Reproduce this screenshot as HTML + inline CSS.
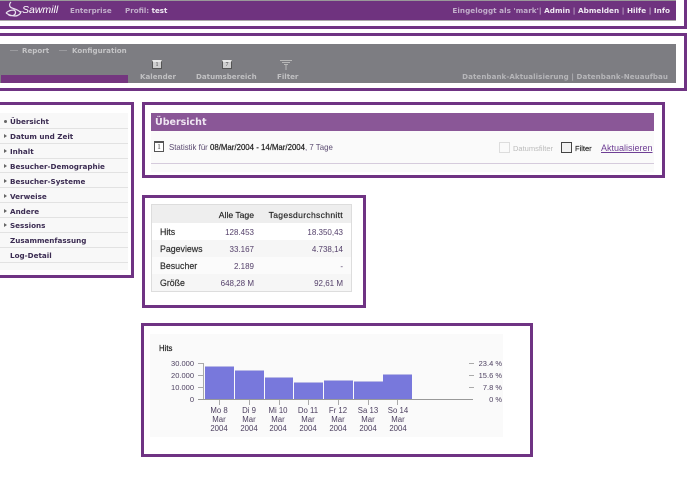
<!DOCTYPE html>
<html lang="de">
<head>
<meta charset="utf-8">
<title>Sawmill</title>
<style>
html,body{margin:0;padding:0;background:#fff}
#p{position:relative;width:690px;height:486px;overflow:hidden;background:#fff;font-family:"DejaVu Sans","Liberation Sans",sans-serif;font-size:7.5px;color:#3a2a50;filter:blur(.3px)}
#p div,#p span.a{position:absolute;white-space:nowrap}
.b{background:#6f3383}
.v{font-weight:bold;font-size:7.1px}
.n{color:#3b2c52;font-weight:bold;font-size:7.2px;left:10px;margin-top:0.5px}
.s{left:0;width:128px;height:1px;background:#e2e2e2}
.ar{left:4px;width:0;height:0;border-left:3px solid #666;border-top:2.5px solid transparent;border-bottom:2.5px solid transparent}
.t{font-family:"Liberation Sans",sans-serif;font-size:8.2px;color:#333}
.l{font-size:8.8px;-webkit-text-stroke:.2px #333;left:160px}
.h{color:#222;-webkit-text-stroke:.15px #222;font-size:8.6px}
.r{text-align:right;color:#54406a;font-size:8px}
.bar{background:#7878dc;width:29px;border-top:1px solid #b9b9e6;box-sizing:border-box}
.x{font-family:"Liberation Sans",sans-serif;font-size:7.8px;color:#4d4060;text-align:center;width:40px;line-height:9px;white-space:normal!important}
.y{font-family:"Liberation Sans",sans-serif;font-size:7.5px;color:#4d4060;text-align:right}
.ic{width:10px;height:9px;background:#cfcfd0;border:1px solid #555;border-top:2px solid #e8e8e8;box-sizing:border-box;font:6px/6px "Liberation Serif",serif;text-align:center;color:#444}
.tk{width:1px;height:5px;background:#aaa;top:400px}
</style>
</head>
<body>
<div id="p">
<!-- top header -->
<div style="left:0;top:0;width:676px;height:21px;background:#6f337f;border-top:1px solid #999;border-bottom:1px solid #aaa;box-sizing:border-box"></div>
<svg style="position:absolute;left:5px;top:1px" width="18" height="18" viewBox="0 0 18 18" fill="none" stroke="#e8e0ee" stroke-width="1.2"><path d="M6 1C4 3 4 6 7 7c3 1 7 2 9 5M16 10c0 3-3 5-6 5-3 0-6-1-9-3M1 12c2-2 5-3 8-3 2 1 2 4 0 5-2 1-5 1-6-1"/></svg>
<div style="left:22px;top:3px;font:italic 10.500px 'Liberation Sans',sans-serif;color:#fff;line-height:14px">Sawmill</div>
<div class="v" style="left:70px;top:6px;color:#c2aecb">Enterprise</div>
<div class="v" style="left:125px;top:6px;color:#c2aecb">Profil: <span style="color:#efe9f2">test</span></div>
<div class="v" style="right:20px;top:6px;color:#c2aecb;font-size:7.25px;letter-spacing:.02px">Eingeloggt als 'mark'| <span style="color:#efe9f2">Admin</span> | <span style="color:#efe9f2">Abmelden</span> | <span style="color:#efe9f2">Hilfe</span> | <span style="color:#efe9f2">Info</span></div>
<!-- annotation frame 1 -->
<div class="b" style="left:0;top:26px;width:687px;height:3px"></div>
<div class="b" style="left:684px;top:0;width:3px;height:29px"></div>
<!-- nav -->
<div class="b" style="left:0;top:33px;width:687px;height:3px"></div>
<div class="b" style="left:0;top:88px;width:687px;height:3px"></div>
<div class="b" style="left:684px;top:33px;width:3px;height:58px"></div>
<div style="left:0;top:44px;width:676px;height:39px;background:#7d7d82"></div>
<div style="left:1px;top:75px;width:127px;height:8px;background:#74367f"></div>
<div style="left:10px;top:50px;width:8px;height:1px;background:#9a9a9e"></div>
<div class="v" style="left:22px;top:45.500px;color:#c4c4c6">Report</div>
<div style="left:59px;top:50px;width:8px;height:1px;background:#9a9a9e"></div>
<div class="v" style="left:72px;top:45.500px;color:#c4c4c6">Konfiguration</div>
<div class="ic" style="left:152px;top:60px">1</div>
<div class="ic" style="left:222px;top:60px">7</div>
<svg style="position:absolute;left:280px;top:60px" width="12" height="10" viewBox="0 0 12 10" fill="none" stroke="#b8b8b8"><path d="M0 .5h12M2 2.500h8M4 4.500h4M6 4v6"/></svg>
<div class="v" style="left:140px;top:72px;color:#c0c0c2">Kalender</div>
<div class="v" style="left:196px;top:72px;color:#c0c0c2">Datumsbereich</div>
<div class="v" style="left:277px;top:72px;color:#c0c0c2">Filter</div>
<div class="v" style="right:22px;top:72px;color:#b6b6b9;letter-spacing:.07px">Datenbank-Aktualisierung | Datenbank-Neuaufbau</div>
<!-- sidebar -->
<div class="b" style="left:0;top:102px;width:134px;height:3px"></div>
<div class="b" style="left:0;top:275px;width:134px;height:3px"></div>
<div class="b" style="left:131px;top:102px;width:3px;height:176px"></div>
<div style="left:0;top:113px;width:128px;height:157px;background:#f8f8f8"></div>
<div style="left:4px;top:120px;width:3px;height:3px;border-radius:2px;background:#666"></div>
<div class="n" style="top:116.500px">Übersicht</div><div class="s" style="top:128px"></div>
<div class="ar" style="top:134px"></div><div class="n" style="top:131px">Datum und Zeit</div><div class="s" style="top:143px"></div>
<div class="ar" style="top:149px"></div><div class="n" style="top:146px">Inhalt</div><div class="s" style="top:158px"></div>
<div class="ar" style="top:164px"></div><div class="n" style="top:161px">Besucher-Demographie</div><div class="s" style="top:172px"></div>
<div class="ar" style="top:179px"></div><div class="n" style="top:176px">Besucher-Systeme</div><div class="s" style="top:187px"></div>
<div class="ar" style="top:194px"></div><div class="n" style="top:191px">Verweise</div><div class="s" style="top:202px"></div>
<div class="ar" style="top:209px"></div><div class="n" style="top:206px">Andere</div><div class="s" style="top:217px"></div>
<div class="ar" style="top:223px"></div><div class="n" style="top:220px">Sessions</div><div class="s" style="top:232px"></div>
<div class="n" style="top:235px">Zusammenfassung</div><div class="s" style="top:247px"></div>
<div class="n" style="top:250px">Log-Detail</div><div class="s" style="top:262px"></div>
<!-- overview -->
<div style="left:142px;top:102px;width:523px;height:76px;border:3px solid #6f3383;box-sizing:border-box"></div>
<div style="left:151px;top:113px;width:503px;height:59px;background:#fafafa"></div>
<div style="left:151px;top:113px;width:503px;height:18px;background:#8a5797"></div>
<div style="left:155px;top:115px;font:bold 9.500px 'DejaVu Sans',sans-serif;color:#efe6f2;line-height:15px">Übersicht</div>
<div style="left:151px;top:163px;width:503px;height:1px;background:#d5cbdc"></div>
<div style="left:154px;top:141px;width:10px;height:11px;border:1px solid #555;border-top-width:2px;box-sizing:border-box;background:#fff;font:7px/8px 'Liberation Serif',serif;text-align:center;color:#333">1</div>
<div class="t" style="left:169px;top:142.500px;color:#5a4a70;font-size:7.850px">Statistik für <b style="font-weight:normal;color:#222;-webkit-text-stroke:.2px #222">08/Mar/2004 - 14/Mar/2004</b>, 7 Tage</div>
<div style="left:499px;top:142px;width:9px;height:9px;border:1px solid #ddd"></div>
<div class="t" style="left:513px;top:144px;color:#bbb;font-size:7.5px">Datumsfilter</div>
<div style="left:561px;top:142px;width:9px;height:9px;border:1px solid #444;background:#f2f2f2"></div>
<div class="t" style="left:575px;top:144px;color:#222;font-size:7.5px;-webkit-text-stroke:.15px #222">Filter</div>
<div class="t" style="left:601px;top:143px;color:#6f3f95;font-size:9px;text-decoration:underline">Aktualisieren</div>
<!-- table -->
<div style="left:142px;top:195px;width:224px;height:113px;border:3px solid #6f3383;box-sizing:border-box"></div>
<div style="left:151px;top:204px;width:201px;height:88px;border:1px solid #ddd;box-sizing:border-box;background:#fbfbfb"></div>
<div style="left:152px;top:205px;width:199px;height:18px;background:#eeeeee"></div>
<div style="left:152px;top:223px;width:199px;height:17px;background:#fff"></div>
<div style="left:152px;top:240px;width:199px;height:17px;background:#f6f6f6"></div>
<div style="left:152px;top:274px;width:199px;height:17px;background:#f6f6f6"></div>
<div class="t h" style="right:436px;top:209.500px">Alle Tage</div>
<div class="t h" style="right:347px;top:209.500px;letter-spacing:.3px">Tagesdurchschnitt</div>
<div class="t l" style="top:226.500px">Hits</div>
<div class="t r" style="right:436px;top:228px">128.453</div>
<div class="t r" style="right:347px;top:228px">18.350,43</div>
<div class="t l" style="top:243.500px">Pageviews</div>
<div class="t r" style="right:436px;top:245px">33.167</div>
<div class="t r" style="right:347px;top:245px">4.738,14</div>
<div class="t l" style="top:260.500px">Besucher</div>
<div class="t r" style="right:436px;top:262px">2.189</div>
<div class="t r" style="right:347px;top:262px">-</div>
<div class="t l" style="top:277.500px">Größe</div>
<div class="t r" style="right:436px;top:279px">648,28 M</div>
<div class="t r" style="right:347px;top:279px">92,61 M</div>
<!-- chart -->
<div style="left:141px;top:323px;width:392px;height:134px;border:3px solid #6f3383;box-sizing:border-box"></div>
<div style="left:150px;top:334px;width:353px;height:103px;background:#fafafa"></div>
<div class="t" style="left:159px;top:344px;color:#222;font-size:7.8px;-webkit-text-stroke:.2px #222">Hits</div>
<div style="left:203px;top:363px;width:1px;height:36px;background:#aaa"></div>
<div style="left:198px;top:363px;width:5px;height:1px;background:#aaa"></div>
<div style="left:198px;top:375px;width:5px;height:1px;background:#aaa"></div>
<div style="left:198px;top:387px;width:5px;height:1px;background:#aaa"></div>
<div style="left:198px;top:399px;width:275px;height:1px;background:#999"></div>
<div style="left:469px;top:363px;width:5px;height:1px;background:#aaa"></div>
<div style="left:469px;top:375px;width:5px;height:1px;background:#aaa"></div>
<div style="left:469px;top:387px;width:5px;height:1px;background:#aaa"></div>
<div class="y" style="right:496px;top:359px">30.000</div>
<div class="y" style="right:496px;top:371px">20.000</div>
<div class="y" style="right:496px;top:383px">10.000</div>
<div class="y" style="right:496px;top:395px">0</div>
<div class="y" style="right:188px;top:359px">23.4 %</div>
<div class="y" style="right:188px;top:371px">15.6 %</div>
<div class="y" style="right:188px;top:383px">7.8 %</div>
<div class="y" style="right:188px;top:395px">0 %</div>
<div class="bar" style="left:205px;height:33px;top:366px"></div>
<div class="bar" style="left:235px;height:29px;top:370px"></div>
<div class="bar" style="left:265px;height:22px;top:377px;width:28px"></div>
<div class="bar" style="left:294px;height:17px;top:382px"></div>
<div class="bar" style="left:324px;height:19px;top:380px"></div>
<div class="bar" style="left:354px;height:18px;top:381px"></div>
<div class="bar" style="left:383px;height:25px;top:374px"></div>
<div class="tk" style="left:219px"></div>
<div class="tk" style="left:249px"></div>
<div class="tk" style="left:279px"></div>
<div class="tk" style="left:308px"></div>
<div class="tk" style="left:338px"></div>
<div class="tk" style="left:368px"></div>
<div class="tk" style="left:397px"></div>
<div class="x" style="left:199px;top:406px">Mo 8<br>Mar<br>2004</div>
<div class="x" style="left:229px;top:406px">Di 9<br>Mar<br>2004</div>
<div class="x" style="left:258px;top:406px">Mi 10<br>Mar<br>2004</div>
<div class="x" style="left:288px;top:406px">Do 11<br>Mar<br>2004</div>
<div class="x" style="left:318px;top:406px">Fr 12<br>Mar<br>2004</div>
<div class="x" style="left:348px;top:406px">Sa 13<br>Mar<br>2004</div>
<div class="x" style="left:378px;top:406px">So 14<br>Mar<br>2004</div>
</div>
</body>
</html>
